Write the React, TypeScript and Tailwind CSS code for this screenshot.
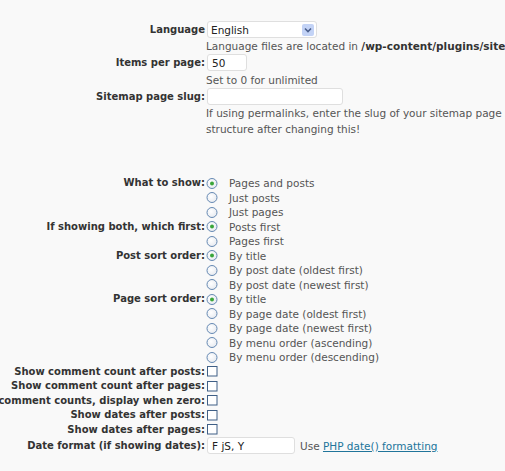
import React from 'react';

const labelCls = 'w-[205px] shrink-0 flex justify-end font-bold text-[10px] text-[#333] whitespace-nowrap';

function Radio({ checked = false }: { checked?: boolean }) {
  return (
    <svg width="13" height="13" viewBox="0 0 13 13" className="shrink-0">
      <defs>
        <radialGradient id="rg" cx="0.4" cy="0.4" r="0.7">
          <stop offset="0" stopColor="#ffffff" />
          <stop offset="1" stopColor="#e4e8ee" />
        </radialGradient>
      </defs>
      <circle cx="7" cy="6.5" r="5" fill="url(#rg)" stroke="#6689b3" strokeWidth="1" />
      {checked && <circle cx="7" cy="6.5" r="2" fill="#3aa53a" />}
    </svg>
  );
}

function Checkbox() {
  return (
    <svg width="13" height="13" viewBox="0 0 13 13" className="shrink-0">
      <rect x="2.5" y="1.5" width="9.5" height="9.5" fill="#ffffff" stroke="#3f5f86" strokeWidth="1" />
    </svg>
  );
}

function Row({ label, children, className = '' }: { label?: string; children?: React.ReactNode; className?: string }) {
  return (
    <div className={`flex items-center ${className}`}>
      <div className={labelCls}>
        <span>{label}</span>
      </div>
      <div className="flex items-center">{children}</div>
    </div>
  );
}

function RadioRow({ label, text, checked }: { label?: string; text: string; checked?: boolean }) {
  return (
    <Row label={label} className="h-[14.5px]">
      <Radio checked={checked} />
      <span className="ml-[11px] text-[#555] whitespace-nowrap">{text}</span>
    </Row>
  );
}

function CheckRow({ label }: { label: string }) {
  return (
    <Row label={label} className="h-[14.5px]">
      <Checkbox />
    </Row>
  );
}

export default function App() {
  return (
    <div
      className="w-[505px] h-[471px] overflow-hidden bg-[#f9f9f9] text-[10.5px] leading-[14px] text-[#333]"
      style={{ fontFamily: 'Verdana, "DejaVu Sans", sans-serif' }}
    >
      {/* general settings */}
      <div className="pt-[21px]">
        <Row label="Language" className="h-[17px]">
          <div className="ml-[2px] w-[110px] h-[17px] flex items-center justify-between bg-white border border-[#dfdfdf] rounded-[3px] pl-[3px] pr-[2px]">
            <span className="text-[#222]">English</span>
            <span className="w-[12px] h-[12px] rounded-[2px] bg-[#c3d3f6] flex items-center justify-center">
              <svg width="8" height="6" viewBox="0 0 8 6">
                <path d="M1 1.5 L4 4.5 L7 1.5" fill="none" stroke="#4a5f8c" strokeWidth="1.6" />
              </svg>
            </span>
          </div>
        </Row>
        <Row className="h-[16px]">
          <span className="ml-[1px] text-[#555] whitespace-nowrap">
            Language files are located in <b className="text-[#333]">/wp-content/plugins/sitemap-generator/lang/</b>
          </span>
        </Row>
        <Row label="Items per page:" className="h-[17px]">
          <div className="ml-[2px] w-[40px] h-[17px] bg-white border border-[#dfdfdf] rounded-[3px] pl-[4px] flex items-center text-[#222]">
            50
          </div>
        </Row>
        <Row className="h-[17px]">
          <span className="ml-[1px] text-[#555] whitespace-nowrap">Set to 0 for unlimited</span>
        </Row>
        <Row label="Sitemap page slug:" className="h-[17px]">
          <div className="ml-[2px] w-[136px] h-[17px] bg-white border border-[#dfdfdf] rounded-[3px]" />
        </Row>
        <div className="flex">
          <div className="w-[205px] shrink-0" />
          <div className="ml-[1px] text-[#555] leading-[16px] whitespace-nowrap">
            <div>If using permalinks, enter the slug of your sitemap page here. You must update your permalink</div>
            <div>structure after changing this!</div>
          </div>
        </div>
      </div>

      {/* display options */}
      <div className="mt-[39px]">
        <RadioRow label="What to show:" text="Pages and posts" checked />
        <RadioRow text="Just posts" />
        <RadioRow text="Just pages" />
        <RadioRow label="If showing both, which first:" text="Posts first" checked />
        <RadioRow text="Pages first" />
        <RadioRow label="Post sort order:" text="By title" checked />
        <RadioRow text="By post date (oldest first)" />
        <RadioRow text="By post date (newest first)" />
        <RadioRow label="Page sort order:" text="By title" checked />
        <RadioRow text="By page date (oldest first)" />
        <RadioRow text="By page date (newest first)" />
        <RadioRow text="By menu order (ascending)" />
        <RadioRow text="By menu order (descending)" />
        <CheckRow label="Show comment count after posts:" />
        <CheckRow label="Show comment count after pages:" />
        <CheckRow label="If showing comment counts, display when zero:" />
        <CheckRow label="Show dates after posts:" />
        <CheckRow label="Show dates after pages:" />
        <Row label="Date format (if showing dates):" className="h-[17px]">
          <div className="ml-[2px] w-[88px] h-[17px] bg-white border border-[#dfdfdf] rounded-[3px] pl-[4px] flex items-center text-[#222]">
            F jS, Y
          </div>
          <span className="ml-[5px] text-[#555]">
            Use{' '}
            <a href="#" className="text-[#21759b] underline">
              PHP date() formatting
            </a>
          </span>
        </Row>
      </div>
    </div>
  );
}
